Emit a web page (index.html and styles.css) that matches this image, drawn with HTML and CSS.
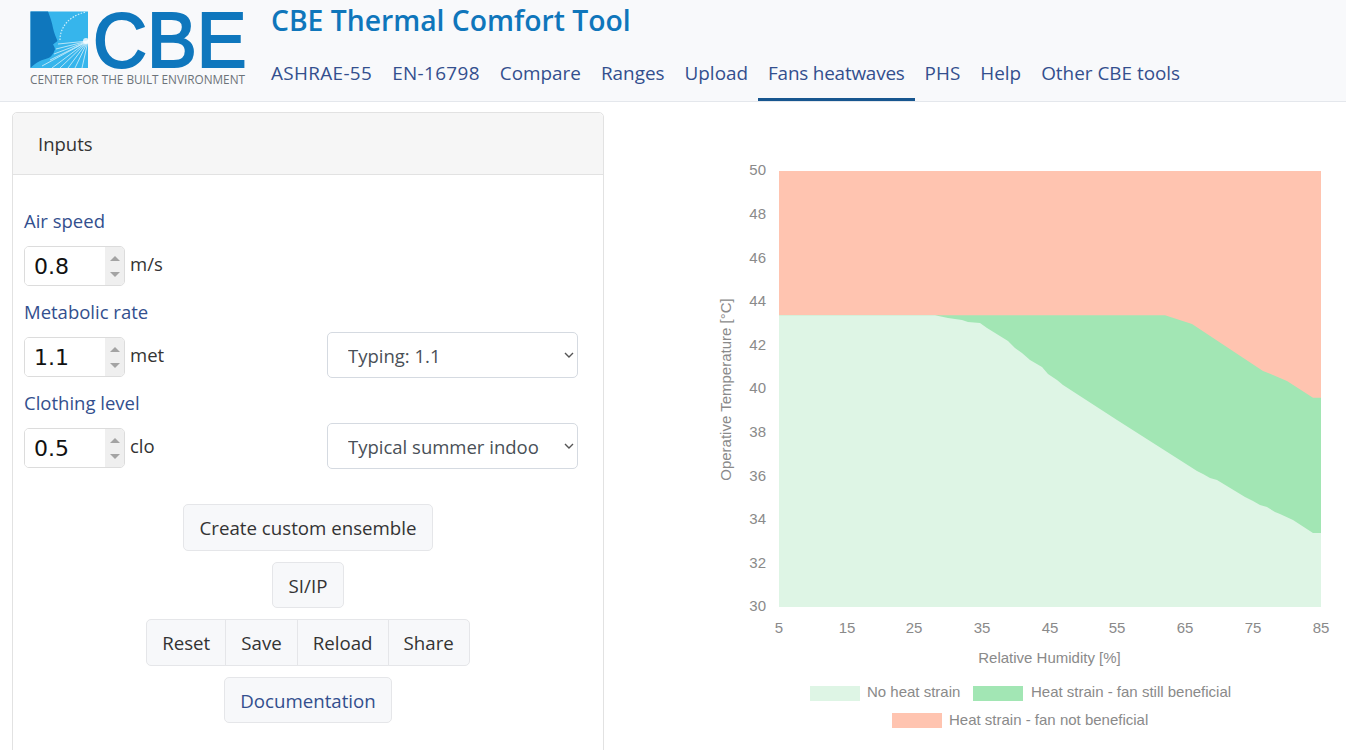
FILE: index.html
```html
<!DOCTYPE html>
<html lang="en">
<head>
    <meta charset="UTF-8">
    <meta name="viewport" content="width=device-width, initial-scale=1.0">
    <title>CBE Thermal Comfort Tool</title>
    <link rel="stylesheet" href="styles.css">
</head>
<body>
    <header class="topbar">
        <svg class="logo" width="271" height="101" viewBox="0 0 271 101">
            <rect x="30.5" y="11.5" width="57.5" height="56.5" fill="#36b5ec"/>
            <path d="M30.5 11.5H48C50 17 52 22 53 28C54 33 56 37 57.5 41L53 44.5C54 46 55 48 55 50C54 52 53 54 52 55C51 57 49 58 47 58.5C44 59.5 42 60 40 61C36 63 33 65 30.5 68Z" fill="#0f77bd"/>
            <path d="M34 68C40 62 46 61 52 59C54 53 55 49 56 46L58 41H88V68Z" fill="#36b5ec"/>
            <g class="rays">
                <path d="M88 41L58 44M88 41L56 49M88 41L54 54M88 41L50 60M88 41L42 66M88 41L52 68M88 41L60 68M88 41L68 68M88 41L75 68M88 41L82 68"/>
            </g>
            <path class="arc" d="M60 40C60 28 68 16 86 12"/>
            <circle cx="86" cy="41" r="3" fill="#fff" opacity="0.8"/>
            <text class="logo-mark" x="93" y="67" textLength="153.5" lengthAdjust="spacingAndGlyphs">CBE</text>
            <text class="logo-sub" x="30" y="83.5" textLength="215" lengthAdjust="spacingAndGlyphs">CENTER FOR THE BUILT ENVIRONMENT</text>
        </svg>
        <div class="brand">
            <h1 class="title">CBE Thermal Comfort Tool</h1>
            <nav class="nav">
                <a href="#" class="wide">ASHRAE-55</a>
                <a href="#" class="wide">EN-16798</a>
                <a href="#">Compare</a>
                <a href="#">Ranges</a>
                <a href="#">Upload</a>
                <a href="#" class="active">Fans heatwaves</a>
                <a href="#">PHS</a>
                <a href="#">Help</a>
                <a href="#">Other CBE tools</a>
            </nav>
        </div>
    </header>

    <main class="content">
        <section class="card">
            <div class="card-header">Inputs</div>
            <div class="card-body">
                <div class="field">
                    <label class="field-label">Air speed</label>
                    <div class="field-row">
                        <div class="number">
                            <input type="text" value="0.8">
                            <div class="spin"><i class="up"></i><i class="down"></i></div>
                        </div>
                        <span class="unit">m/s</span>
                    </div>
                </div>
                <div class="field">
                    <label class="field-label">Metabolic rate</label>
                    <div class="field-row">
                        <div class="number">
                            <input type="text" value="1.1">
                            <div class="spin"><i class="up"></i><i class="down"></i></div>
                        </div>
                        <span class="unit">met</span>
                        <select class="preset">
                            <option>Typing: 1.1</option>
                        </select>
                    </div>
                </div>
                <div class="field">
                    <label class="field-label">Clothing level</label>
                    <div class="field-row">
                        <div class="number">
                            <input type="text" value="0.5">
                            <div class="spin"><i class="up"></i><i class="down"></i></div>
                        </div>
                        <span class="unit">clo</span>
                        <select class="preset">
                            <option>Typical summer indoor clothing</option>
                        </select>
                    </div>
                </div>

                <div class="actions">
                    <button class="btn btn-ensemble">Create custom ensemble</button>
                    <button class="btn btn-units">SI/IP</button>
                    <div class="btn-group">
                        <button class="btn">Reset</button>
                        <button class="btn">Save</button>
                        <button class="btn">Reload</button>
                        <button class="btn">Share</button>
                    </div>
                    <button class="btn btn-docs">Documentation</button>
                </div>
            </div>
        </section>

        <section class="chart-panel">
            <!-- viewBox uses page coordinates so the curve points read straight off the screenshot -->
            <svg class="chart" width="646" height="600" viewBox="700 150 646 600">
                <rect x="779" y="171" width="542" height="436" fill="#ffc4b0"/>
                <polygon fill="#a2e6b4" points="779,315.3 1165,315.3 1192,324 1263,371 1273,375 1287,381 1313,397.7 1321,397.7 1321,607 779,607"/>
                <polygon fill="#def5e5" points="779,315.3 935,315.3 948,318 962,320 968,322 980,323 987,328 1008,341 1015,348 1022,353 1030,360 1042,367 1048,374 1057,380 1063,385 1117,420 1197,471 1203,474 1210,478 1217,480 1245,497 1253,501 1260,505 1267,507 1275,512 1280,514 1293,520 1313,533 1321,533 1321,607 779,607"/>

                <g class="tick tick-y">
                    <text x="766" y="175">50</text>
                    <text x="766" y="219">48</text>
                    <text x="766" y="263">46</text>
                    <text x="766" y="306">44</text>
                    <text x="766" y="350">42</text>
                    <text x="766" y="393">40</text>
                    <text x="766" y="437">38</text>
                    <text x="766" y="481">36</text>
                    <text x="766" y="524">34</text>
                    <text x="766" y="568">32</text>
                    <text x="766" y="611">30</text>
                </g>
                <g class="tick tick-x">
                    <text x="779" y="633">5</text>
                    <text x="847" y="633">15</text>
                    <text x="914" y="633">25</text>
                    <text x="982" y="633">35</text>
                    <text x="1050" y="633">45</text>
                    <text x="1117" y="633">55</text>
                    <text x="1185" y="633">65</text>
                    <text x="1253" y="633">75</text>
                    <text x="1321" y="633">85</text>
                </g>
                <text class="axis-title" x="1049.5" y="663">Relative Humidity [%]</text>
                <text class="axis-title" transform="translate(731 389.5) rotate(-90)">Operative Temperature [°C]</text>

                <rect x="810" y="686" width="50" height="15" fill="#def5e5"/>
                <text class="legend" x="867" y="697">No heat strain</text>
                <rect x="973" y="686" width="50" height="15" fill="#a2e6b4"/>
                <text class="legend" x="1031" y="697">Heat strain - fan still beneficial</text>
                <rect x="892" y="713" width="50" height="15" fill="#ffc4b0"/>
                <text class="legend" x="949" y="725">Heat strain - fan not beneficial</text>
            </svg>
        </section>
    </main>
</body>
</html>
```

FILE: styles.css
```css
* {
    box-sizing: border-box;
}

html, body {
    height: 100%;
}

body {
    margin: 0;
    overflow: hidden;
    background-color: #fff;
    font-family: "Open Sans", "Noto Sans", Arial, sans-serif;
    color: #333;
}

.topbar {
    display: flex;
    height: 102px;
    background-color: #f8f9fb;
    border-bottom: 1px solid #e4e7ec;
}

.logo {
    flex: none;
}

.logo-mark {
    font-family: "Liberation Sans", Arial, sans-serif;
    font-size: 78px;
    fill: #0f77bd;
    stroke: #0f77bd;
    stroke-width: 2.2px;
}

.logo-sub {
    font-family: "Open Sans", Arial, sans-serif;
    font-size: 12px;
    font-weight: 500;
    fill: #6c7379;
}

.rays path {
    fill: none;
    stroke: #d8f1fb;
    stroke-width: 0.8;
}

.arc {
    fill: none;
    stroke: #cfeefa;
    stroke-width: 1.2;
    stroke-dasharray: 1.5 1.5;
}

.brand {
    display: flex;
    flex-direction: column;
    justify-content: space-between;
}

.title {
    margin: 0;
    font-size: 28.3px;
    line-height: 40px;
    font-weight: 600;
    color: #0f76bb;
}

.nav {
    display: flex;
    margin-left: -10px;
}

.nav a {
    padding: 13px 10px 8px;
    font-size: 18.9px;
    line-height: 33px;
    color: #334f8e;
    text-decoration: none;
    border-bottom: 3px solid transparent;
}

.nav a.wide {
    letter-spacing: 0.35px;
}

.nav a.active {
    letter-spacing: -0.2px;
    border-bottom-color: #17568f;
}

.content {
    display: flex;
}

.card {
    flex: none;
    width: 592px;
    height: 700px;
    margin: 10px 0 0 12px;
    border: 1px solid #e2e2e2;
    border-radius: 5px;
}

.card-header {
    height: 62px;
    padding-left: 25px;
    font-size: 18.5px;
    line-height: 62px;
    background-color: #f6f6f6;
    border-bottom: 1px solid #e2e2e2;
    border-radius: 5px 5px 0 0;
}

.card-body {
    padding: 33px 25px 0 11px;
}

.field {
    margin-bottom: 13px;
}

.field-label {
    display: block;
    height: 26px;
    margin-bottom: 12px;
    font-size: 18.5px;
    line-height: 26px;
    color: #334f8e;
}

.field-row {
    display: flex;
    align-items: flex-start;
    height: 40px;
}

.number {
    display: flex;
    flex: none;
    width: 101px;
    height: 40px;
    overflow: hidden;
    border: 1px solid #dcdcdc;
    border-radius: 5px;
}

.number input {
    width: 80px;
    padding: 0 0 0 9px;
    border: none;
    outline: none;
    font-family: "DejaVu Sans", sans-serif;
    font-size: 22px;
    color: #111;
}

.spin {
    display: flex;
    flex: none;
    flex-direction: column;
    align-items: center;
    justify-content: space-around;
    width: 20px;
    padding: 3px 0;
    background-color: #efefef;
}

.spin i {
    width: 0;
    height: 0;
    border-left: 5px solid transparent;
    border-right: 5px solid transparent;
}

.spin .up {
    border-bottom: 5px solid #a3a3a3;
}

.spin .down {
    border-top: 5px solid #a3a3a3;
}

.unit {
    margin-left: 5px;
    font-size: 18.5px;
    line-height: 36px;
}

.preset {
    appearance: none;
    width: 251px;
    height: 46px;
    margin: -5px 0 0 auto;
    padding: 0 37px 0 20px;
    font-family: "Open Sans", sans-serif;
    font-size: 18.5px;
    color: #495057;
    background-color: #fff;
    background-image: url("data:image/svg+xml,%3Csvg xmlns='http://www.w3.org/2000/svg' width='10' height='6'%3E%3Cpath d='M1 1l4 4 4-4' fill='none' stroke='%23555' stroke-width='1.4'/%3E%3C/svg%3E");
    background-repeat: no-repeat;
    background-position: right 3px center;
    border: 1px solid #d5dae1;
    border-radius: 5px;
}

.actions {
    display: flex;
    flex-direction: column;
    align-items: center;
    gap: 11px;
    width: 568px;
    margin-top: 36px;
}

.btn {
    height: 47px;
    padding: 0 15.5px;
    font-family: "Open Sans", sans-serif;
    font-size: 18.7px;
    color: #333;
    background-color: #f7f8fa;
    border: 1px solid #e5e6e9;
    border-radius: 5px;
}

.btn-units {
    height: 46px;
}

.btn-docs {
    height: 46px;
    color: #334f8e;
}

.btn-group {
    display: flex;
}

.btn-group .btn {
    padding: 0 15px;
    border-radius: 0;
    margin-left: -1px;
}

.btn-group .btn:first-child {
    margin-left: 0;
    border-radius: 5px 0 0 5px;
}

.btn-group .btn:last-child {
    border-radius: 0 5px 5px 0;
}

.chart-panel {
    flex: 1;
    padding: 48px 0 0 96px;
}

.chart {
    display: block;
}

.chart text {
    font-family: "Liberation Sans", Arial, sans-serif;
    fill: #8a8a8a;
}

.tick text {
    font-size: 15px;
}

.tick-y text {
    text-anchor: end;
}

.tick-x text {
    text-anchor: middle;
}

.chart .axis-title {
    font-size: 15px;
    text-anchor: middle;
}

.chart .legend {
    font-size: 15px;
}
```
